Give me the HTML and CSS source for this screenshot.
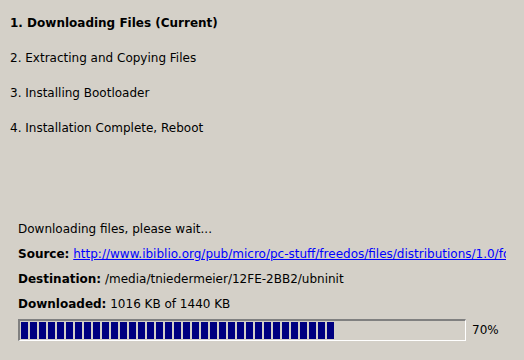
FILE: index.html
```html
<!DOCTYPE html>
<html>
<head>
<meta charset="utf-8">
<link rel="stylesheet" href="styles.css">
</head>
<body>
<div class="page">
  <ol class="steps">
    <li class="step current">1. Downloading Files (Current)</li>
    <li class="step">2. Extracting and Copying Files</li>
    <li class="step">3. Installing Bootloader</li>
    <li class="step">4. Installation Complete, Reboot</li>
  </ol>
  <div class="status">
    <div class="row">Downloading files, please wait...</div>
    <div class="row"><b>Source:</b> <a class="link" href="#">http://www.ibiblio.org/pub/micro/pc-stuff/freedos/files/distributions/1.0/fdbasecd.iso</a></div>
    <div class="row"><b>Destination:</b> /media/tniedermeier/12FE-2BB2/ubninit</div>
    <div class="row"><b>Downloaded:</b> 1016 KB of 1440 KB</div>
    <div class="progress-row">
      <div class="bar">
        <div class="chunks" id="chunks"></div>
      </div>
      <span class="pct">70%</span>
    </div>
  </div>
</div>
<script src="script.js"></script>
</body>
</html>
```
FILE: script.js
```js
var c = document.getElementById('chunks');
for (var i = 0; i < 35; i++) {
  var d = document.createElement('span');
  d.className = 'chunk';
  c.appendChild(d);
}
```
FILE: styles.css
```css
html, body {
  margin: 0;
  padding: 0;
}
body {
  background: #d4d0c8;
  font-family: "DejaVu Sans", sans-serif;
  font-size: 12px;
  color: #000;
  width: 524px;
  height: 360px;
  overflow: hidden;
}
.steps {
  list-style: none;
  margin: 0;
  padding: 6px 0 0 10px;
}
.step {
  line-height: 35px;
  height: 35px;
}
.step.current {
  font-weight: bold;
}
.status {
  margin-top: 71px;
  padding: 0 18px;
}
.row {
  line-height: 25px;
  height: 25px;
  white-space: nowrap;
  overflow: hidden;
}
.link {
  color: #0000ff;
  text-decoration: underline;
}
.progress-row {
  display: flex;
  align-items: center;
  gap: 6px;
  margin-top: 2px;
}
.bar {
  box-sizing: border-box;
  width: 448px;
  height: 22px;
  border-style: solid;
  border-width: 2px 1px 1px 2px;
  border-color: #808080 #ffffff #ffffff #808080;
  padding: 1px;
}
.chunks {
  display: flex;
  gap: 2px;
  height: 17px;
}
.chunk {
  width: 7px;
  height: 17px;
  background: #000080;
  flex: none;
}
.pct {
  line-height: 14px;
}
```
